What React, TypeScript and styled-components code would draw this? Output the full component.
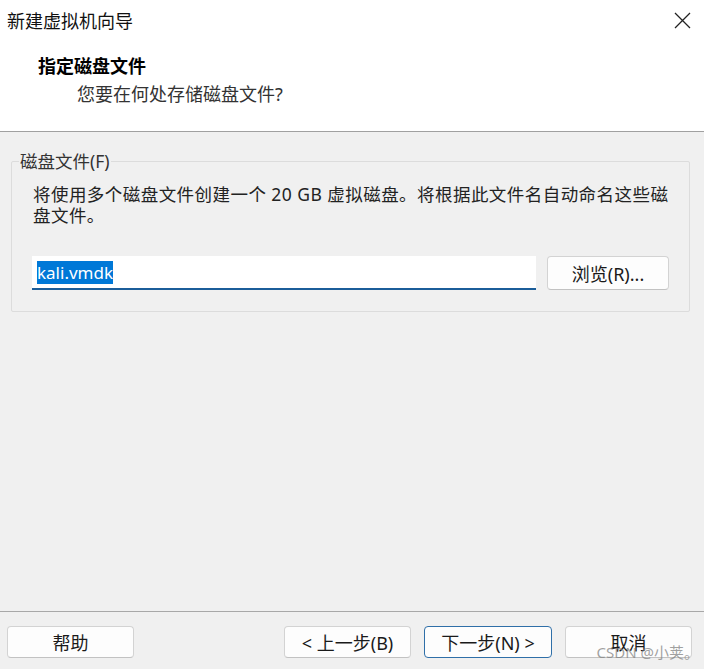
import React from "react";
import styled, { createGlobalStyle } from "styled-components";

const GlobalStyle = createGlobalStyle`
  html, body { margin: 0; padding: 0; background: #f0f0f0; }
  body {
    font-family: "Noto Sans", "Noto Sans CJK SC", sans-serif;
    color: #1a1a1a;
  }
  * { box-sizing: border-box; }
`;

const Window = styled.div`
  width: 704px;
  height: 669px;
  display: flex;
  flex-direction: column;
  background: #f0f0f0;
  position: relative;
  overflow: hidden;
`;

const TitleBar = styled.div`
  height: 40px;
  background: #ffffff;
  display: flex;
  align-items: center;
  justify-content: space-between;
  padding: 0 13px 0 7px;
`;

const TitleText = styled.div`
  font-size: 18px;
  color: #111;
`;

const CloseButton = styled.div`
  width: 18px;
  height: 18px;
  display: flex;
  align-items: center;
  justify-content: center;
`;

const Header = styled.div`
  height: 92px;
  background: #ffffff;
  border-bottom: 1px solid #a0a0a0;
  display: flex;
  flex-direction: column;
  padding: 14px 0 0 38px;
`;

const Heading = styled.div`
  font-size: 18px;
  font-weight: 700;
  line-height: 24px;
  color: #000;
`;

const SubHeading = styled.div`
  font-size: 18px;
  line-height: 24px;
  margin: 4px 0 0 39px;
  color: #333;
`;

const Body = styled.div`
  flex: 1;
  padding: 18px 14px 0 11px;
`;

const GroupBox = styled.fieldset`
  margin: 0;
  padding: 0 0 21px 0;
  border: 1px solid #dcdcdc;
  border-radius: 2px;
`;

const Legend = styled.legend`
  margin-left: 7px;
  padding: 0 1px;
  font-size: 17.5px;
  line-height: 22px;
  color: #333;
`;

const GroupContent = styled.div`
  padding: 12px 20px 0 20px;
  display: flex;
  flex-direction: column;
`;

const Description = styled.div`
  font-size: 17.5px;
  letter-spacing: 0.45px;
  line-height: 21px;
  color: #222;
  padding-left: 1px;
`;

const FileRow = styled.div`
  display: flex;
  gap: 11px;
  margin-top: 30px;
`;

const PathField = styled.div`
  flex: 1;
  height: 34px;
  background: #ffffff;
  border-bottom: 2px solid #1b5d99;
  display: flex;
  align-items: center;
  padding-left: 5px;
  font-size: 17px;
`;

const Selected = styled.span`
  background: #0078d7;
  color: #ffffff;
  line-height: 23px;
  height: 23px;
  display: inline-block;
`;

const Button = styled.div<{ $primary?: boolean }>`
  width: ${(p) => (p.$primary ? "128px" : "127px")};
  height: 32px;
  display: flex;
  align-items: center;
  justify-content: center;
  background: #fdfdfd;
  border: 1px solid ${(p) => (p.$primary ? "#2f6fa8" : "#d3d3d3")};
  border-bottom-color: ${(p) => (p.$primary ? "#2f6fa8" : "#c2c2c2")};
  border-radius: 4px;
  font-size: 18px;
  color: #1a1a1a;
`;

const BrowseButton = styled(Button)`
  width: 122px;
  height: 34px;
`;

const Footer = styled.div`
  height: 58px;
  border-top: 1px solid #a8a8a8;
  display: flex;
  align-items: flex-start;
  padding: 14px 12px 0 7px;
  gap: 13px;
`;

const Spacer = styled.div`
  flex: 1;
`;

const Watermark = styled.div`
  position: absolute;
  right: 5px;
  bottom: 7px;
  font-size: 15px;
  color: rgba(130, 130, 130, 0.75);
  pointer-events: none;
`;

export default function App() {
  return (
    <>
      <GlobalStyle />
      <Window>
        <TitleBar>
          <TitleText>新建虚拟机向导</TitleText>
          <CloseButton>
            <svg width="17" height="17" viewBox="0 0 17 17">
              <path d="M1 1 L16 16 M16 1 L1 16" stroke="#222" strokeWidth="1.3" fill="none" />
            </svg>
          </CloseButton>
        </TitleBar>
        <Header>
          <Heading>指定磁盘文件</Heading>
          <SubHeading>您要在何处存储磁盘文件?</SubHeading>
        </Header>
        <Body>
          <GroupBox>
            <Legend>磁盘文件(F)</Legend>
            <GroupContent>
              <Description>
                将使用多个磁盘文件创建一个 20 GB 虚拟磁盘。将根据此文件名自动命名这些磁盘文件。
              </Description>
              <FileRow>
                <PathField>
                  <Selected>kali.vmdk</Selected>
                </PathField>
                <BrowseButton>浏览(R)...</BrowseButton>
              </FileRow>
            </GroupContent>
          </GroupBox>
        </Body>
        <Footer>
          <Button>帮助</Button>
          <Spacer />
          <Button>&lt; 上一步(B)</Button>
          <Button $primary>下一步(N) &gt;</Button>
          <Button>取消</Button>
        </Footer>
        <Watermark>CSDN @小荚。</Watermark>
      </Window>
    </>
  );
}
